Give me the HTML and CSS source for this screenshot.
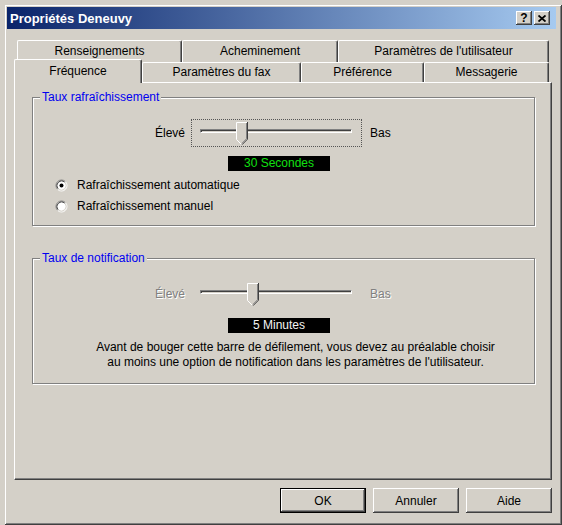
FILE: index.html
```html
<!DOCTYPE html>
<html lang="fr">
<head>
<meta charset="utf-8">
<title>Propriétés Deneuvy</title>
<link rel="stylesheet" href="styles.css">
</head>
<body>
<div class="window">
  <div class="titlebar">
    <span class="title">Propriétés Deneuvy</span>
    <div class="capbtns">
      <span class="capbtn help">?</span>
      <span class="capbtn close"><svg width="8" height="7" viewBox="0 0 8 7"><path d="M0.5 0.5 L7.5 6.5 M7.5 0.5 L0.5 6.5" stroke="#000" stroke-width="1.8" fill="none"/></svg></span>
    </div>
  </div>

  <div class="tabs">
    <div class="tabrow back">
      <div class="tab t-rens">Renseignements</div>
      <div class="tab t-ach">Acheminement</div>
      <div class="tab t-util">Paramètres de l'utilisateur</div>
    </div>
    <div class="tabrow front">
      <div class="tab sel t-freq">Fréquence</div>
      <div class="tab t-fax">Paramètres du fax</div>
      <div class="tab t-pref">Préférence</div>
      <div class="tab t-msg">Messagerie</div>
    </div>
  </div>

  <div class="panel">
    <div class="group g1">
      <div class="gtitle">Taux rafraîchissement</div>
      <div class="slider-row">
        <span class="sl-left">Élevé</span>
        <div class="slider focus">
          <div class="track"></div>
          <svg class="thumb th1" width="12" height="23" viewBox="0 0 12 23">
            <polygon points="0,0 12,0 12,17 6,23 0,17" fill="#d4d0c8"/>
            <polyline points="0.5,17.5 0.5,0.5 11,0.5" fill="none" stroke="#fff"/>
            <line x1="0.5" y1="17.5" x2="5.5" y2="22.5" stroke="#fff"/>
            <polyline points="11.5,0 11.5,17.2 6,22.7" fill="none" stroke="#404040"/>
            <polyline points="10.5,1 10.5,16.8 6,21.3" fill="none" stroke="#808080"/>
          </svg>
        </div>
        <span class="sl-right">Bas</span>
      </div>
      <div class="display green">30 Secondes</div>
      <div class="radio">
        <svg width="13" height="13" viewBox="0 0 13 13">
          <circle cx="6.5" cy="6.5" r="5" fill="#fff"/>
          <path d="M10.39 2.61 A5.5 5.5 0 0 0 2.61 10.39" fill="none" stroke="#808080"/>
          <path d="M10.39 2.61 A5.5 5.5 0 0 1 2.61 10.39" fill="none" stroke="#fff"/>
          <path d="M9.68 3.32 A4.5 4.5 0 0 0 3.32 9.68" fill="none" stroke="#404040"/>
          <path d="M9.68 3.32 A4.5 4.5 0 0 1 3.32 9.68" fill="none" stroke="#d4d0c8"/>
          <circle cx="6.5" cy="6.5" r="2" fill="#000"/>
        </svg>
        <span>Rafraîchissement automatique</span>
      </div>
      <div class="radio">
        <svg width="13" height="13" viewBox="0 0 13 13">
          <circle cx="6.5" cy="6.5" r="5" fill="#fff"/>
          <path d="M10.39 2.61 A5.5 5.5 0 0 0 2.61 10.39" fill="none" stroke="#808080"/>
          <path d="M10.39 2.61 A5.5 5.5 0 0 1 2.61 10.39" fill="none" stroke="#fff"/>
          <path d="M9.68 3.32 A4.5 4.5 0 0 0 3.32 9.68" fill="none" stroke="#404040"/>
          <path d="M9.68 3.32 A4.5 4.5 0 0 1 3.32 9.68" fill="none" stroke="#d4d0c8"/>
        </svg>
        <span>Rafraîchissement manuel</span>
      </div>
    </div>

    <div class="group g2">
      <div class="gtitle">Taux de notification</div>
      <div class="slider-row">
        <span class="sl-left disabled">Élevé</span>
        <div class="slider">
          <div class="track"></div>
          <svg class="thumb th2" width="12" height="23" viewBox="0 0 12 23">
            <polygon points="0,0 12,0 12,17 6,23 0,17" fill="#d4d0c8"/>
            <polyline points="0.5,17.5 0.5,0.5 11,0.5" fill="none" stroke="#fff"/>
            <line x1="0.5" y1="17.5" x2="5.5" y2="22.5" stroke="#fff"/>
            <polyline points="11.5,0 11.5,17.2 6,22.7" fill="none" stroke="#404040"/>
            <polyline points="10.5,1 10.5,16.8 6,21.3" fill="none" stroke="#808080"/>
          </svg>
        </div>
        <span class="sl-right disabled">Bas</span>
      </div>
      <div class="display white d2">5 Minutes</div>
      <p class="note">Avant de bouger cette barre de défilement, vous devez au préalable choisir<br>au moins une option de notification dans les paramètres de l'utilisateur.</p>
    </div>
  </div>

  <div class="buttons">
    <div class="btn default">OK</div>
    <div class="btn">Annuler</div>
    <div class="btn">Aide</div>
  </div>
</div>
</body>
</html>
```

FILE: styles.css
```css
html, body {
  margin: 0;
  padding: 0;
}
body {
  width: 562px;
  height: 525px;
  overflow: hidden;
  background: #d4d0c8;
  font-family: "Liberation Sans", Arial, sans-serif;
  font-size: 12px;
  color: #000;
}
.window {
  margin: 4px 0 0 4px;
  width: 558px;
  height: 521px;
  box-sizing: border-box;
  padding: 3px;
  background: #d4d0c8;
  box-shadow: inset 1px 1px 0 #d4d0c8, inset -1px -1px 0 #404040,
              inset 2px 2px 0 #fff, inset -2px -2px 0 #808080;
}
.titlebar {
  height: 22px;
  margin-right: 3px;
  padding: 0 6px 0 3px;
  display: flex;
  align-items: center;
  justify-content: space-between;
  background: linear-gradient(to right, #0a246a, #a6caf0);
}
.title {
  color: #fff;
  font-weight: bold;
  font-size: 13px;
}
.capbtns {
  display: flex;
  gap: 2px;
}
.capbtn {
  width: 16px;
  height: 14px;
  display: flex;
  align-items: center;
  justify-content: center;
  background: #d4d0c8;
  box-shadow: inset -1px -1px 0 #404040, inset 1px 1px 0 #fff, inset -2px -2px 0 #808080;
  font-weight: bold;
  font-size: 12px;
  line-height: 14px;
}
.tabs {
  margin-top: 11px;
  margin-left: 7px;
}
.tabrow {
  display: flex;
  align-items: flex-start;
}
.tabrow.back {
  margin-left: 3px;
  height: 22px;
}
.tabrow.front {
  height: 20px;
}
.tab {
  box-sizing: border-box;
  text-align: center;
  white-space: nowrap;
  background: #d4d0c8;
  border-top: 1px solid #fff;
  border-left: 1px solid #fff;
  border-right: 1px solid #404040;
  border-radius: 2px 2px 0 0;
  box-shadow: inset -1px 0 0 #808080;
}
.back .tab {
  height: 22px;
  line-height: 21px;
}
.front .tab {
  height: 20px;
  line-height: 19px;
}
.front .tab.sel {
  position: relative;
  z-index: 1;
  margin-top: -3px;
  height: 24px;
  line-height: 22px;
}
.t-rens { width: 165px; }
.t-ach { width: 156px; }
.t-util { width: 211px; }
.t-freq { width: 128px; }
.t-fax { width: 159px; }
.t-pref { width: 123px; }
.t-msg { width: 125px; }

.panel {
  margin-left: 7px;
  width: 538px;
  height: 398px;
  box-sizing: border-box;
  border-top: 1px solid #fff;
  border-left: 1px solid #fff;
  border-right: 1px solid #404040;
  border-bottom: 1px solid #404040;
  box-shadow: inset -1px -1px 0 #808080;
  overflow: hidden;
}
.group {
  box-sizing: border-box;
  margin-left: 17px;
  width: 503px;
  border: 1px solid #808080;
  box-shadow: inset 1px 1px 0 #fff, 1px 1px 0 #fff;
}
.g1 {
  margin-top: 14px;
  height: 129px;
}
.g2 {
  margin-top: 32px;
  height: 126px;
}
.gtitle {
  width: max-content;
  margin: -8px 0 0 7px;
  padding: 0 2px;
  line-height: 14px;
  background: #d4d0c8;
  color: #0000f0;
}
.slider-row {
  display: flex;
  align-items: center;
  margin-top: 15px;
  margin-left: 118px;
}
.sl-left {
  width: 34px;
  text-align: right;
  margin-right: 6px;
}
.sl-right {
  margin-left: 8px;
}
.disabled {
  color: #808080;
  text-shadow: 1px 1px 0 #fff;
}
.slider {
  position: relative;
  width: 171px;
  height: 28px;
  box-sizing: border-box;
  border: 1px dotted transparent;
}
.slider.focus {
  border-color: #555;
}
.track {
  margin: 9px 0 0 8px;
  width: 152px;
  height: 4px;
  box-sizing: border-box;
  border-top: 1px solid #808080;
  border-left: 1px solid #808080;
  border-bottom: 1px solid #fff;
  border-right: 1px solid #fff;
  box-shadow: inset 1px 1px 0 #404040;
}
.thumb {
  position: absolute;
  top: 2px;
  display: block;
}
.th1 { left: 44px; }
.th2 { left: 55px; }
.display {
  margin: 9px 0 0 195px;
  width: 102px;
  height: 15px;
  line-height: 15px;
  background: #000;
  text-align: center;
}
.d2 {
  margin-top: 10px;
}
.green { color: #10e010; }
.white { color: #f4f4f4; }
.radio {
  display: flex;
  align-items: center;
  height: 16px;
  margin: 6px 0 0 22px;
}
.radio + .radio {
  margin-top: 5px;
}
.radio svg {
  display: block;
  margin-right: 9px;
}
.note {
  margin: 7px 0 0 24px;
  line-height: 15px;
  text-align: center;
}
.buttons {
  display: flex;
  justify-content: flex-end;
  gap: 7px;
  margin: 8px 7px 0 0;
}
.btn {
  width: 86px;
  height: 25px;
  box-sizing: border-box;
  display: flex;
  align-items: center;
  justify-content: center;
  background: #d4d0c8;
  box-shadow: inset -1px -1px 0 #404040, inset 1px 1px 0 #fff, inset -2px -2px 0 #808080;
}
.btn.default {
  border: 1px solid #000;
  width: 86px;
}
```
